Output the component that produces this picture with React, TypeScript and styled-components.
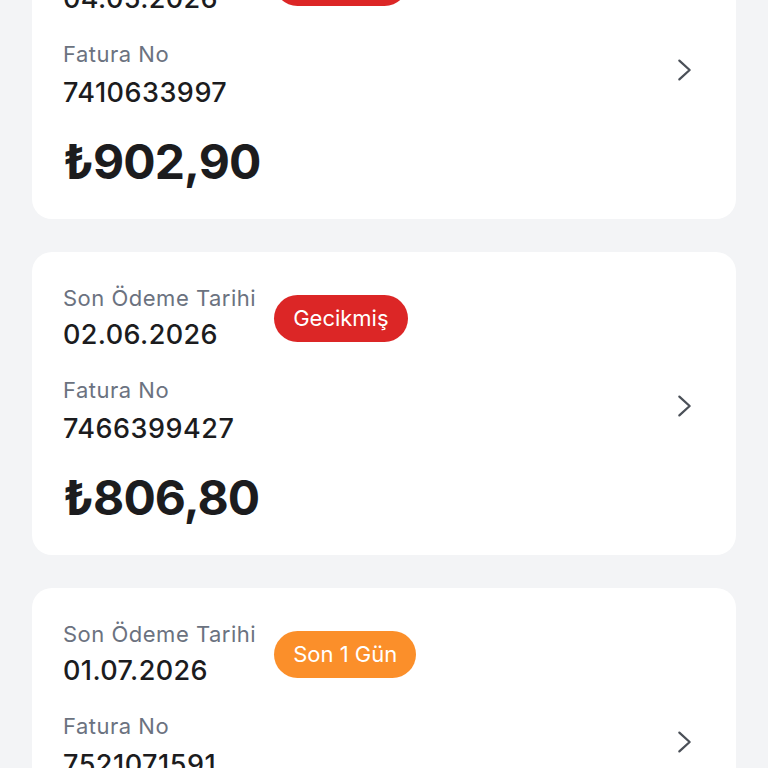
import React from "react";
import styled, { createGlobalStyle } from "styled-components";

const GlobalStyle = createGlobalStyle`
  html, body {
    margin: 0;
    padding: 0;
    background: #f3f4f6;
    height: 100%;
    overflow: hidden;
  }
  body {
    font-family: Inter, "Noto Sans", "Liberation Sans", sans-serif;
    -webkit-font-smoothing: antialiased;
  }
`;

type Status = "late" | "soon";

type Invoice = {
  dueDate: string;
  invoiceNo: string;
  amount: string;
  status: Status;
  statusText: string;
};

const invoices: Invoice[] = [
  { dueDate: "04.05.2026", invoiceNo: "7410633997", amount: "902,90", status: "late", statusText: "Gecikmiş" },
  { dueDate: "02.06.2026", invoiceNo: "7466399427", amount: "806,80", status: "late", statusText: "Gecikmiş" },
  { dueDate: "01.07.2026", invoiceNo: "7521071591", amount: "754,30", status: "soon", statusText: "Son 1 Gün" },
];

export default function App() {
  return (
    <>
      <GlobalStyle />
      <Screen>
        <List>
          {invoices.map((inv) => (
            <Card key={inv.invoiceNo}>
              <Body>
                <TopRow>
                  <Field>
                    <Label>Son Ödeme Tarihi</Label>
                    <DateValue>{inv.dueDate}</DateValue>
                  </Field>
                  <Badge $status={inv.status}>{inv.statusText}</Badge>
                </TopRow>
                <Field>
                  <Label>Fatura No</Label>
                  <NumberValue>{inv.invoiceNo}</NumberValue>
                </Field>
                <Amount>₺{inv.amount}</Amount>
              </Body>
              <Chevron viewBox="0 0 16 24" aria-hidden>
                <path d="M2.5 2 L13.5 12 L2.5 22" />
              </Chevron>
            </Card>
          ))}
        </List>
      </Screen>
    </>
  );
}

const Screen = styled.div`
  width: 768px;
  height: 768px;
  overflow: hidden;
`;

const List = styled.div`
  display: flex;
  flex-direction: column;
  gap: 33px;
  padding: 0 32px;
  margin-top: -84px;
`;

const Card = styled.div`
  display: flex;
  align-items: center;
  background: #ffffff;
  border-radius: 20px;
  padding: 32px 44px 28px 31px;
  height: 303px;
  box-sizing: border-box;
`;

const Body = styled.div`
  flex: 1;
  display: flex;
  flex-direction: column;
`;

const TopRow = styled.div`
  display: flex;
  align-items: center;
  gap: 18px;
  margin-bottom: 25px;
`;

const Field = styled.div`
  display: flex;
  flex-direction: column;
`;

const Label = styled.div`
  font-size: 22px;
  line-height: 27px;
  color: #6b7280;
  letter-spacing: 0.5px;
`;

const DateValue = styled.div`
  margin-top: 6px;
  font-size: 27px;
  line-height: 34px;
  font-weight: 500;
  color: #1c1c1e;
  letter-spacing: 0.4px;
`;

const NumberValue = styled(DateValue)`
  margin-top: 8px;
  letter-spacing: 0.5px;
`;

const Amount = styled.div`
  margin-top: 23px;
  font-size: 48px;
  line-height: 58px;
  font-weight: 700;
  color: #1c1c1e;
  letter-spacing: -0.9px;
`;

const Badge = styled.span<{ $status: Status }>`
  display: inline-flex;
  align-items: center;
  height: 47px;
  padding: 0 19px;
  border-radius: 24px;
  font-size: 22px;
  color: #ffffff;
  background: ${(p) => (p.$status === "late" ? "#dc2626" : "#fb8f2a")};
`;

const Chevron = styled.svg`
  width: 15px;
  height: 24px;
  flex-shrink: 0;
  fill: none;
  stroke: #4b5058;
  stroke-width: 2.4;
  stroke-linecap: round;
  stroke-linejoin: round;
`;
